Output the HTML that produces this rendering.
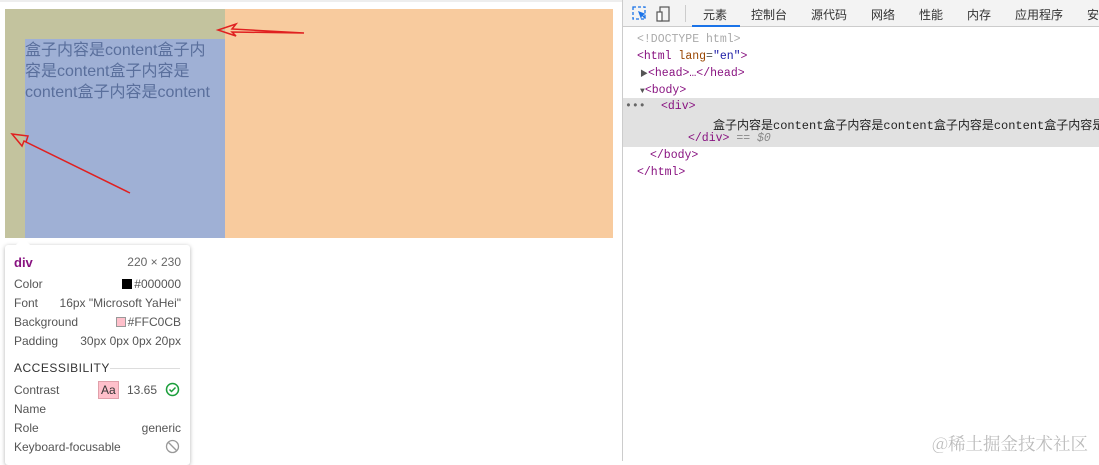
<!DOCTYPE html>
<html><head><meta charset="utf-8"><style>
*{margin:0;padding:0;box-sizing:border-box}
body{width:1099px;height:461px;background:#fff;position:relative;overflow:hidden;font-family:"Liberation Sans","Noto Sans CJK SC",sans-serif}
.a{position:absolute}
.mono{font-family:"Liberation Mono","Noto Sans CJK SC",monospace;font-size:11.5px;white-space:nowrap}
.tt{font-size:12px;color:#555;white-space:nowrap}
</style></head><body>
<div class="a" style="left:0;top:0;width:622px;height:2px;background:#eee"></div>
<div class="a" style="left:5px;top:9px;width:608px;height:229px;background:#f8cb9e"></div>
<div class="a" style="left:5px;top:9px;width:220px;height:229px;background:#c3c39e"></div>
<div class="a" style="left:25px;top:39px;width:200px;height:199px;background:#9fb0d5"></div>
<div class="a" style="left:25px;top:40px;width:202px;font-size:16px;line-height:21px;color:#5a6f9c;font-family:'Liberation Sans','Noto Sans CJK SC',sans-serif;white-space:nowrap">盒子内容是content盒子内<br>容是content盒子内容是<br>content盒子内容是content</div>
<svg class="a" style="left:0;top:0" width="622" height="240">
<g fill="none" stroke="#e02020" stroke-width="1.5">
<path d="M304 33 L232 29 L236 24 L218 30 L236 36 L232 32 Z"/>
<path d="M130 193 L26 142 L28 136 L12 134 L22 146 L24 141 Z"/>
</g></svg>
<div class="a" style="left:5px;top:245px;width:185px;height:220px;background:#fff;box-shadow:0 1px 4px rgba(0,0,0,.3);border-radius:3px"></div>
<div class="a" style="left:18px;top:240px;width:10px;height:10px;background:#fff;transform:rotate(45deg)"></div>
<div class="a tt" style="left:14px;top:255px;font-weight:bold;color:#881280;font-size:13px">div</div>
<div class="a tt" style="right:918px;top:255px;color:#666">220 × 230</div>
<div class="a tt" style="left:14px;top:277px">Color</div>
<div class="a tt" style="right:918px;top:277px"><span style="display:inline-block;width:10px;height:10px;background:#000;vertical-align:-1px;margin-right:2px"></span>#000000</div>
<div class="a tt" style="left:14px;top:296px">Font</div>
<div class="a tt" style="right:918px;top:296px">16px "Microsoft YaHei"</div>
<div class="a tt" style="left:14px;top:315px">Background</div>
<div class="a tt" style="right:918px;top:315px"><span style="display:inline-block;width:10px;height:10px;background:#ffc0cb;border:1px solid #999;vertical-align:-1px;margin-right:2px"></span>#FFC0CB</div>
<div class="a tt" style="left:14px;top:334px">Padding</div>
<div class="a tt" style="right:918px;top:334px">30px 0px 0px 20px</div>
<div class="a tt" style="left:14px;top:361px;color:#333;letter-spacing:.5px">ACCESSIBILITY</div>
<div class="a" style="left:110px;top:368px;width:70px;height:1px;background:#ddd"></div>
<div class="a tt" style="left:14px;top:383px">Contrast</div>
<div class="a tt" style="left:98px;top:381px;background:#ffc0cb;border:1px solid #e0a0aa;padding:1px 2px;color:#333">Aa</div>
<div class="a tt" style="left:127px;top:383px">13.65</div>
<svg class="a" style="left:165px;top:382px" width="15" height="15"><circle cx="7.5" cy="7.5" r="6" fill="none" stroke="#1a9e3a" stroke-width="1.5"/><path d="M4.5 7.5l2 2 4-4" fill="none" stroke="#1a9e3a" stroke-width="1.5"/></svg>
<div class="a tt" style="left:14px;top:402px">Name</div>
<div class="a tt" style="left:14px;top:421px">Role</div>
<div class="a tt" style="right:918px;top:421px">generic</div>
<div class="a tt" style="left:14px;top:440px">Keyboard-focusable</div>
<svg class="a" style="left:165px;top:439px" width="15" height="15"><circle cx="7.5" cy="7.5" r="6" fill="none" stroke="#999" stroke-width="1.3"/><path d="M3.5 3.5l8 8" stroke="#999" stroke-width="1.3"/></svg>

<div class="a" style="left:622px;top:0;width:1px;height:461px;background:#ccc"></div>
<div class="a" style="left:623px;top:0;width:476px;height:27px;background:#f3f3f3;border-bottom:1px solid #ccc"></div>
<svg class="a" style="left:632px;top:6px" width="40" height="16"><rect x="1" y="1" width="12" height="12" fill="none" stroke="#1a73e8" stroke-width="1.3" stroke-dasharray="3 2"/><path d="M6 5l8 3-3 1 3 3-1 1-3-3-1 3z" fill="#1a73e8"/><rect x="28" y="1" width="9" height="14" fill="none" stroke="#555" stroke-width="1.2"/><rect x="25" y="6" width="5" height="9" fill="#fff" stroke="#555" stroke-width="1.2"/></svg>
<div class="a" style="left:685px;top:5px;width:1px;height:17px;background:#ccc"></div>
<div class="a" style="left:692px;top:25px;width:48px;height:2px;background:#1a73e8"></div>
<div class="a" style="left:623px;top:6px;font-size:12px;color:#333;white-space:nowrap">
<span class="a" style="left:80px">元素</span><span class="a" style="left:128px">控制台</span><span class="a" style="left:188px">源代码</span><span class="a" style="left:248px">网络</span><span class="a" style="left:296px">性能</span><span class="a" style="left:344px">内存</span><span class="a" style="left:392px">应用程序</span><span class="a" style="left:464px">安</span></div>
<div class="a" style="left:623px;top:98px;width:476px;height:49px;background:#e1e1e1"></div>
<div class="a mono" style="left:637px;top:33px;color:#aaa">&lt;!DOCTYPE html&gt;</div>
<div class="a mono" style="left:637px;top:50px;color:#881280">&lt;html <span style="color:#994500">lang</span><span style="color:#555">=</span><span style="color:#1a1aa6">"en"</span>&gt;</div>
<div class="a mono" style="left:640px;top:67px;color:#881280"><span style="color:#555;font-size:8px">▶</span>&lt;head&gt;…&lt;/head&gt;</div>
<div class="a mono" style="left:640px;top:84px;color:#881280"><span style="color:#555;font-size:8px">▼</span>&lt;body&gt;</div>
<div class="a mono" style="left:625px;top:100px;color:#666">•••</div>
<div class="a mono" style="left:661px;top:100px;color:#881280">&lt;div&gt;</div>
<div class="a mono" style="left:713px;top:116px;color:#222;font-size:12px">盒子内容是content盒子内容是content盒子内容是content盒子内容是c</div>
<div class="a mono" style="left:688px;top:132px;color:#881280">&lt;/div&gt; <span style="color:#888;font-style:italic">== $0</span></div>
<div class="a mono" style="left:650px;top:149px;color:#881280">&lt;/body&gt;</div>
<div class="a mono" style="left:637px;top:166px;color:#881280">&lt;/html&gt;</div>
<div class="a" style="left:932px;top:431px;font-size:17.5px;color:#bbb;font-family:'Noto Serif CJK SC',serif;white-space:nowrap">@稀土掘金技术社区</div>
</body></html>
